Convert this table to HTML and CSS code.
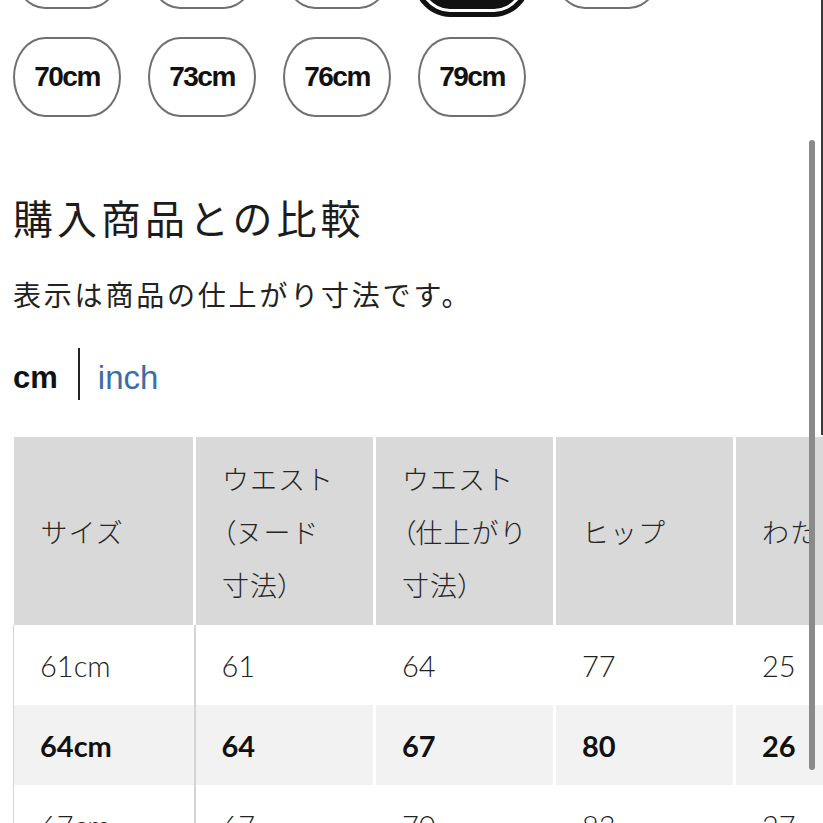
FILE: index.html
```html
<!DOCTYPE html>
<html lang="ja">
<head>
<meta charset="utf-8">
<title>購入商品との比較</title>
<link rel="stylesheet" href="styles.css">
</head>
<body>
<main class="page">
  <div class="chips">
    <button class="chip">55cm</button>
    <button class="chip">58cm</button>
    <button class="chip">61cm</button>
    <button class="chip chip-selected">64cm</button>
    <button class="chip">67cm</button>
    <button class="chip">70cm</button>
    <button class="chip">73cm</button>
    <button class="chip">76cm</button>
    <button class="chip">79cm</button>
  </div>

  <h2 class="title">購入商品との比較</h2>
  <p class="note">表示は商品の仕上がり寸法です。</p>

  <div class="units">
    <span class="unit unit-active">cm</span>
    <span class="unit-sep"></span>
    <span class="unit unit-link">inch</span>
  </div>

  <div class="table-wrap">
    <table class="size-table">
      <thead>
        <tr>
          <th class="col-first">サイズ</th>
          <th>ウエスト<br><span class="paren">（</span>ヌード<br>寸法<span class="paren">）</span></th>
          <th>ウエスト<br><span class="paren">（</span>仕上がり<br>寸法<span class="paren">）</span></th>
          <th>ヒップ</th>
          <th>わたり</th>
          <th>股上</th>
        </tr>
      </thead>
      <tbody>
        <tr>
          <td class="col-first">61cm</td>
          <td>61</td><td>64</td><td>77</td><td>25</td><td>27</td>
        </tr>
        <tr class="row-current">
          <td class="col-first">64cm</td>
          <td>64</td><td>67</td><td>80</td><td>26</td><td>28</td>
        </tr>
        <tr>
          <td class="col-first">67cm</td>
          <td>67</td><td>70</td><td>83</td><td>27</td><td>28</td>
        </tr>
      </tbody>
    </table>
  </div>
</main>
<div class="scroll-thumb"></div>
<div class="edge-line"></div>
</body>
</html>
```

FILE: styles.css
```css
html, body {
  margin: 0;
  padding: 0;
  overflow: hidden;
  background: #fff;
}

body {
  width: 823px;
  height: 823px;
  font-family: "Noto Sans CJK JP", "Liberation Sans", sans-serif;
  color: #222;
}

.page {
  padding-left: 13px;
}

/* size chips */
.chips {
  width: 650px;
  margin-top: -71px;
  display: flex;
  flex-wrap: wrap;
  column-gap: 27px;
  row-gap: 28px;
}

.chip {
  width: 108px;
  height: 80px;
  box-sizing: border-box;
  border: 2px solid #707070;
  border-radius: 32px / 40px;
  background: #fff;
  color: #111;
  font-family: "Liberation Sans", "Noto Sans", sans-serif;
  font-weight: 700;
  font-size: 28px;
  letter-spacing: -1.5px;
  padding: 0;
  display: flex;
  align-items: center;
  justify-content: center;
}

.chip-selected {
  background: #111;
  color: #fff;
  border-color: #111;
  box-shadow: 0 0 0 3px #fff, 0 0 0 8px #111;
}

/* headings */
.title {
  margin: 76px 0 0;
  font-size: 40px;
  line-height: 48px;
  font-weight: 400;
  letter-spacing: 4px;
  color: #1c1c1c;
}

.note {
  margin: 33px 0 0;
  font-size: 28px;
  line-height: 40px;
  letter-spacing: 2.8px;
  color: #222;
}

/* units */
.units {
  margin-top: 34px;
  height: 52px;
  display: flex;
  align-items: center;
}

.unit {
  font-family: "Liberation Sans", "Noto Sans", sans-serif;
  padding-top: 8px;
}

.unit-active {
  font-size: 31px;
  font-weight: 700;
  color: #111;
}

.unit-sep {
  width: 2px;
  height: 52px;
  background: #222;
  margin: 0 18px 0 20px;
}

.unit-link {
  font-size: 33px;
  color: #3b6ea6;
}

/* table */
.table-wrap {
  margin-top: 37px;
  overflow: hidden;
  width: 810px;
}

.size-table {
  border-collapse: collapse;
  table-layout: fixed;
  width: 1080px;
}

.size-table th,
.size-table td {
  width: 180px;
  box-sizing: border-box;
  text-align: left;
  vertical-align: middle;
  padding: 0 0 0 26px;
  border-left: 3px solid #fff;
  white-space: nowrap;
}

.size-table th {
  height: 188px;
  background: #d9d9d9;
  font-weight: 300;
  font-size: 27px;
  line-height: 53px;
  color: #262626;
  letter-spacing: 1px;
}

.paren {
  font-feature-settings: "palt";
  letter-spacing: 0;
}

.size-table th.col-first {
  border-left: none;
  width: 181px;
  padding-left: 27px;
}

.size-table td {
  height: 80px;
  font-family: "Lato", "Liberation Sans", sans-serif;
  font-weight: 300;
  font-size: 29px;
  color: #222;
}

.size-table td.col-first {
  border-left: 1px solid #d4d4d4;
  border-right: 2px solid #d4d4d4;
  padding-left: 26px;
}

.size-table td.col-first + td {
  border-left: none;
}

.row-current td {
  background: #f2f2f2;
  font-weight: 700;
  color: #111;
}

/* overlay scrollbar thumb */
.scroll-thumb {
  position: fixed;
  left: 809px;
  top: 140px;
  width: 6px;
  height: 630px;
  border-radius: 3px;
  background: #8a8a8a;
}

.edge-line {
  position: fixed;
  right: 0;
  top: 0;
  width: 2px;
  height: 435px;
  background: #3a3a3a;
}
```
